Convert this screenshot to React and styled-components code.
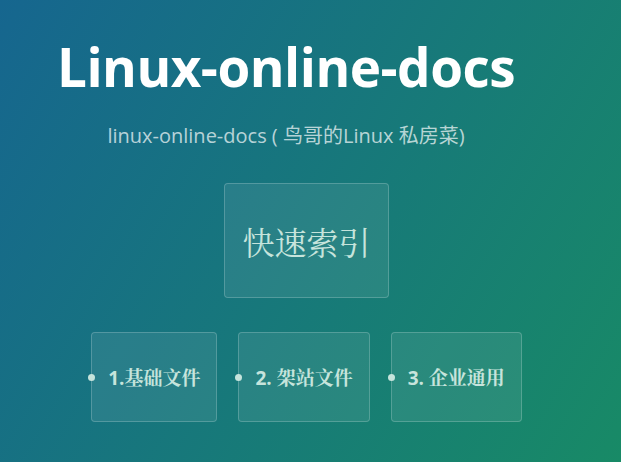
import React from 'react';
import styled, { createGlobalStyle } from 'styled-components';

const GlobalStyle = createGlobalStyle`
  html, body {
    margin: 0;
    padding: 0;
  }
  body {
    font-family: "Open Sans", "Noto Sans CJK SC", sans-serif;
    color: #fff;
  }
`;

const Page = styled.div`
  width: 621px;
  height: 462px;
  overflow: hidden;
  box-sizing: border-box;
  background-color: #178a68;
  background-image: linear-gradient(120deg, #16668f, #188a66);
`;

const Header = styled.header`
  display: flex;
  flex-direction: column;
  align-items: center;
  padding: 31px 49px 0 0;
`;

const ProjectName = styled.h1`
  margin: 0;
  font-family: "Open Sans", sans-serif;
  font-size: 53px;
  font-weight: 700;
  line-height: 72px;
  color: #fff;
  letter-spacing: -0.5px;
`;

const Tagline = styled.h2`
  margin: 19px 0 0;
  font-family: "Open Sans", "Noto Sans CJK SC", sans-serif;
  font-size: 20px;
  font-weight: 400;
  line-height: 28px;
  color: rgba(255, 255, 255, 0.7);
`;

const Map = styled.section`
  display: flex;
  flex-direction: column;
  align-items: center;
  padding: 33px 8px 0 0;
`;

const Node = styled.div`
  box-sizing: border-box;
  display: flex;
  align-items: center;
  justify-content: center;
  background: rgba(255, 255, 255, 0.08);
  border: 1px solid rgba(255, 255, 255, 0.2);
  border-radius: 4px;
  color: #c6e4dc;
`;

const RootNode = styled(Node)`
  width: 165px;
  height: 115px;
  font-family: "Noto Serif CJK SC", "Noto Sans CJK SC", serif;
  font-size: 32px;
  font-weight: 400;
`;

const Branches = styled.ul`
  display: flex;
  gap: 21px;
  margin: 34px 0 0;
  padding: 0;
  list-style: none;
`;

const Branch = styled.li`
  position: relative;

  &::before {
    content: "";
    position: absolute;
    left: -3px;
    top: 50%;
    width: 7px;
    height: 7px;
    margin-top: -3px;
    border-radius: 50%;
    background: #c6e4dc;
  }
`;

const BranchNode = styled(Node)`
  height: 90px;
  padding: 0 16px;
  font-family: "Open Sans", "Noto Serif CJK SC", "Noto Sans CJK SC", sans-serif;
  font-size: 19px;
  font-weight: 700;
  white-space: pre;
`;

const branches = ['1.基础文件', '2. 架站文件', '3. 企业通用'];

export default function App() {
  return (
    <Page>
      <GlobalStyle />
      <Header>
        <ProjectName>Linux-online-docs</ProjectName>
        <Tagline>linux-online-docs ( 鸟哥的Linux 私房菜)</Tagline>
      </Header>
      <Map>
        <RootNode>快速索引</RootNode>
        <Branches>
          {branches.map((b) => (
            <Branch key={b}>
              <BranchNode>{b}</BranchNode>
            </Branch>
          ))}
        </Branches>
      </Map>
    </Page>
  );
}
